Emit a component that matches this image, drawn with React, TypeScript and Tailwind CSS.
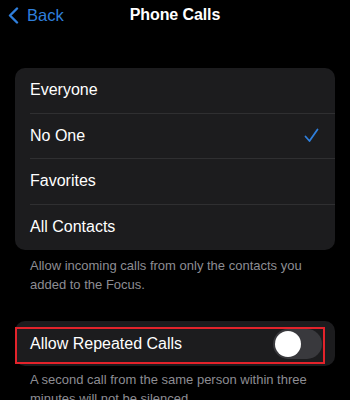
import React from "react";

const options = ["Everyone", "No One", "Favorites", "All Contacts"];

function Check() {
  return (
    <svg width="15" height="15" viewBox="0 0 15 15" fill="none">
      <path d="M1.5 8.5 L5.5 13 L13.5 1.5" stroke="#2f7fdc" strokeWidth="1.8" strokeLinecap="round" strokeLinejoin="round" />
    </svg>
  );
}

export default function App() {
  const selected = "No One";
  return (
    <div className="w-[350px] h-[400px] bg-black overflow-hidden text-white font-['Liberation_Sans',Arial,sans-serif]">
      {/* nav bar */}
      <div className="grid grid-cols-[1fr_auto_1fr] items-center h-[30px]">
        <div className="flex items-center pl-[8px] text-[#2f7fdc] text-[16.5px]">
          <svg width="11" height="17" viewBox="0 0 11 17" fill="none" className="mr-[8px]">
            <path d="M9 1.5 L2 8.5 L9 15.5" stroke="#2f7fdc" strokeWidth="2.4" strokeLinecap="round" strokeLinejoin="round" />
          </svg>
          <span>Back</span>
        </div>
        <div className="text-[16px] font-bold tracking-[-0.1px]">Phone Calls</div>
        <div />
      </div>

      <div className="mt-[38px] mx-[15px] rounded-[10px] bg-[#1c1c1e] overflow-hidden">
        {options.map((o, i) => (
          <div key={o} className="flex h-[45.5px] pl-[15px]">
            <div
              className={
                "flex-1 flex items-center justify-between pr-[16px] text-[16px] " +
                (i < options.length - 1 ? "border-b border-[#2f2f31]" : "")
              }
            >
              <span>{o}</span>
              {o === selected && <Check />}
            </div>
          </div>
        ))}
      </div>

      <p className="mt-[6px] px-[30px] text-[13px] leading-[19px] text-[#8d8d93]">
        Allow incoming calls from only the contacts you added to the Focus.
      </p>

      <div className="relative mt-[27px] mx-[15px] h-[45px] rounded-[10px] bg-[#1c1c1e] flex items-center justify-between pl-[15px] pr-[13px]">
        <span className="text-[16px]">Allow Repeated Calls</span>
        <div className="w-[49px] h-[30px] rounded-full bg-[#39393d] flex items-center pl-[2px]">
          <div className="w-[26px] h-[26px] rounded-full bg-white" />
        </div>
        <div className="absolute left-0 top-[6px] w-[310px] h-[37px] border-2 border-[#e3232b]" />
      </div>

      <p className="mt-[4px] px-[30px] text-[13px] leading-[19px] text-[#8d8d93]">
        A second call from the same person within three minutes will not be silenced.
      </p>
    </div>
  );
}
